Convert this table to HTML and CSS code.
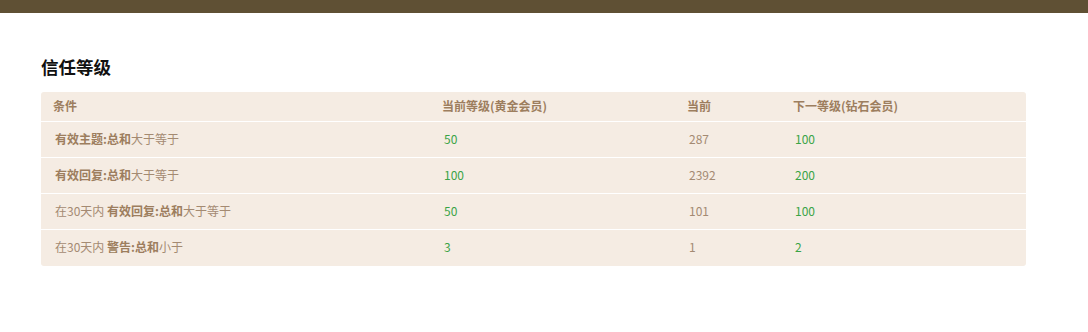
FILE: index.html
```html
<!DOCTYPE html>
<html lang="zh">
<head>
<meta charset="utf-8">
<link rel="stylesheet" href="styles.css">
</head>
<body>
<div class="topbar"></div>
<main class="content">
  <h2 class="title">信任等级</h2>
  <table class="trust">
    <colgroup>
      <col class="c1"><col class="c2"><col class="c3"><col class="c4">
    </colgroup>
    <thead>
      <tr><th>条件</th><th>当前等级(黄金会员)</th><th>当前</th><th>下一等级(钻石会员)</th></tr>
    </thead>
    <tbody>
      <tr><td><b>有效主题:总和</b>大于等于</td><td class="g">50</td><td>287</td><td class="g">100</td></tr>
      <tr><td><b>有效回复:总和</b>大于等于</td><td class="g">100</td><td>2392</td><td class="g">200</td></tr>
      <tr><td>在30天内 <b>有效回复:总和</b>大于等于</td><td class="g">50</td><td>101</td><td class="g">100</td></tr>
      <tr><td>在30天内 <b>警告:总和</b>小于</td><td class="g">3</td><td>1</td><td class="g">2</td></tr>
    </tbody>
  </table>
</main>
</body>
</html>
```
FILE: styles.css
```css
html, body { margin: 0; padding: 0; background: #fff; }
body { font-family: "Noto Sans CJK SC", "Noto Sans", sans-serif; font-size: 12px; }
.topbar { height: 13px; background: #5f5034; }
.content { padding: 41px 62px 0 41px; }
.title { margin: 0 0 12px; font-size: 17.5px; line-height: 26px; font-weight: 700; color: #111; }
.trust { width: 985px; border-collapse: separate; border-spacing: 0; background: #f5ece3; border-radius: 3px; table-layout: fixed; }
.c1 { width: 389px; } .c2 { width: 245px; } .c3 { width: 106px; } .c4 { width: 245px; }
.trust th { height: 29px; padding: 0 0 0 12px; text-align: left; font-weight: 700; color: #9d7e5e; line-height: 27px; vertical-align: top; }
.trust td { height: 35px; padding: 0 0 0 14px; border-top: 1px solid #fff; color: #a48a72; line-height: 34px; vertical-align: top; }
.trust tbody tr:last-child td { height: 36px; }
.trust td b { font-weight: 700; color: #9d7e5e; }
.trust td.g { color: #3aa446; }
```
